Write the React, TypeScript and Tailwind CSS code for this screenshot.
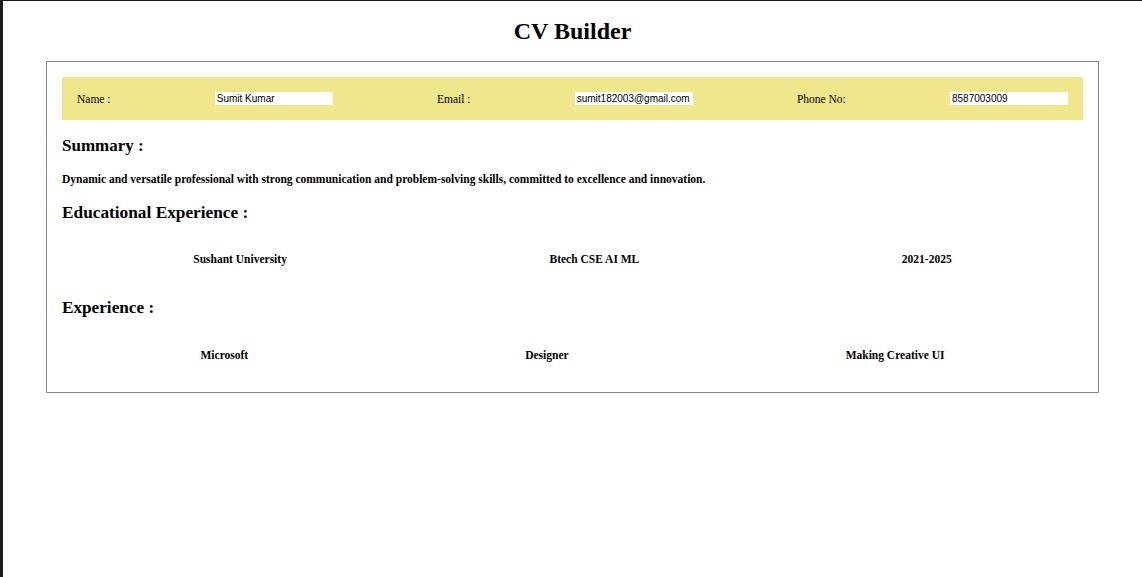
import React from 'react';

const serif = "font-['Liberation_Serif','Times_New_Roman',serif]";

const Field = ({ label, value }: { label: string; value: string }) => (
  <>
    <label className="text-[11.5px] text-black leading-[14px]">{label}</label>
    <input
      readOnly
      value={value}
      className="w-[118px] h-[13px] bg-white px-[2px] text-[10px] leading-[13px] text-black outline-none font-['Liberation_Sans',Arial,sans-serif]"
    />
  </>
);

const Row = ({ items }: { items: string[] }) => (
  <div className="flex justify-around items-center leading-[14px] text-[11.5px] font-bold">
    {items.map((t) => (
      <span key={t}>{t}</span>
    ))}
  </div>
);

const App: React.FC = () => {
  return (
    <div className={`h-[577px] bg-white border-l-[3px] border-t border-[#1b1b21] text-black ${serif}`}>
      <div className="h-[60px] flex items-center justify-center">
        <h1 className="text-[24px] font-bold leading-[28px]">CV Builder</h1>
      </div>

      <div className="ml-[43px] mr-[43px] border border-[#8a8a8a] px-[15px] pt-[15px] pb-[30px]">
        <div className="h-[43px] bg-[#f0e68c] px-[15px] flex items-center justify-between">
          <Field label="Name :" value="Sumit Kumar" />
          <Field label="Email :" value="sumit182003@gmail.com" />
          <Field label="Phone No:" value="8587003009" />
        </div>

        <h3 className="mt-[16px] text-[17px] font-bold leading-[20px]">Summary :</h3>
        <p className="mt-[16px] text-[11.5px] font-bold leading-[14px]">
          Dynamic and versatile professional with strong communication and problem-solving skills, committed to excellence and innovation.
        </p>

        <h3 className="mt-[17px] text-[17.3px] font-bold leading-[20px]">Educational Experience :</h3>
        <div className="mt-[29px]">
          <Row items={['Sushant University', 'Btech CSE AI ML', '2021-2025']} />
        </div>

        <h3 className="mt-[32px] text-[17.2px] font-bold leading-[20px]">Experience :</h3>
        <div className="mt-[30px]">
          <Row items={['Microsoft', 'Designer', 'Making Creative UI']} />
        </div>
      </div>
    </div>
  );
};

export default App;
